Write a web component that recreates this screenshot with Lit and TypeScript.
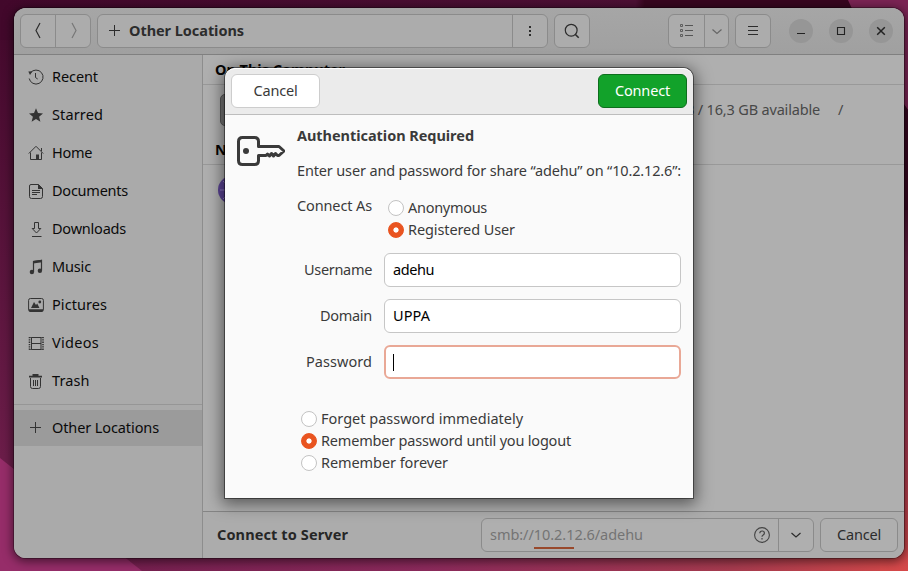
import { LitElement, html, svg, css, TemplateResult } from "lit";
import { customElement, property, state } from "lit/decorators.js";
import { classMap } from "lit/directives/class-map.js";

/* A single line of text tracked so that it fills a given advance width. */
@customElement("ui-text")
class UiText extends LitElement {
  @property() text = "";
  @property({ type: Number }) w = 0;
  @state() private spacing = 0;

  static styles = css`
    :host { display: inline-block; white-space: pre; flex: none; }
    .run { display: inline-block; white-space: pre; transform: translateY(-1px); }
  `;

  private fit() {
    const run = this.renderRoot.querySelector(".run") as HTMLElement;
    const natural = run.getBoundingClientRect().width - this.spacing * this.text.length;
    const next = (this.w - natural) / this.text.length;
    if (Math.abs(next - this.spacing) > 0.005) this.spacing = next;
  }

  firstUpdated() {
    this.fit();
    document.fonts.ready.then(() => this.fit());
  }

  render() {
    return html`<span class="run" style="letter-spacing:${this.spacing}px">${this.text}</span>`;
  }
}

const t = (text: string, w: number) => html`<ui-text .text=${text} .w=${w}></ui-text>`;

const icon = (body: TemplateResult, size = 16) => html`
  <svg width=${size} height=${size} viewBox="0 0 ${size} ${size}" fill="none" stroke="currentColor">${body}</svg>`;

const icons: Record<string, TemplateResult> = {
  recent: svg`<path d="M2.500 3.800A7 7 0 1 1 1.200 9.500M7.500 4v4.500l2.200 1.500"/><path d="M.3 2.600l4.200-.4L2 6z" fill="currentColor" stroke="none"/>`,
  star: svg`<path d="M8 1.200l2 4.900 5 .3-3.900 3.300 1.300 5L8 12l-4.400 2.700 1.300-5L1 6.400l5-.3z" fill="currentColor" stroke="none"/>`,
  home: svg`<path d="M.8 8.500L8 1.300l7.200 7.200M2.500 7.500v7h11v-7M13.500 3v3"/><path d="M8 9.500h3V14H8z" fill="currentColor" stroke="none"/>`,
  doc: svg`<path d="M3 1.500h7.500l4 4v8q0 2-2 2H3.500q-2 0-2-2V3q0-1.500 1.500-1.500zM4 7.500h8M4 9.500h8M4 11.500h5"/><path d="M10 1v5h5z" fill="currentColor" stroke="none"/>`,
  down: svg`<path d="M6.500 1.500h4v6h2.300L8.500 12 4.200 7.500h2.300zM4 15.500h9.500"/>`,
  music: svg`<path d="M5.500 13V2.500l8-1V11" stroke-width="1.200"/><path d="M5 2l9-1.200v2.400L5 4.400z" fill="currentColor" stroke="none"/><circle cx="3.900" cy="13" r="2.200" fill="currentColor" stroke="none"/><circle cx="11.900" cy="11.800" r="2.200" fill="currentColor" stroke="none"/>`,
  pic: svg`<rect x=".6" y="1.500" width="14.800" height="12.500" rx="1.800"/><path d="M.5 12.200h15v1q0 1.800-1.800 1.800H2.300Q.5 15 .5 13.200zM3 11l3-6 2 3 1.200-1.500L11.500 11z" fill="currentColor" stroke="none"/><circle cx="11.800" cy="5" r="1.400" fill="currentColor" stroke="none"/>`,
  video: svg`<path d="M1.500 2v13M15 2v13" stroke-width="1.600" stroke-dasharray="1.300 1"/><path d="M3.500 2.500h9.500v12H3.500zM3.500 8.500H13"/><path d="M1 2.500h14.500M1 14.500h14.500" stroke-width=".7"/>`,
  trash: svg`<path d="M2.500 5v8.500q0 2 2 2h6q2 0 2-2V5M5.500 7v6M7.500 7v6M9.500 7v6"/><path d="M1 3.700h13M4.500 2h6" stroke-width="1.800"/>`,
  plus: svg`<path d="M7.500 2v11M2 7.500h11"/>`,
};

const places: [string, string, number][] = [
  ["recent", "Recent", 46], ["star", "Starred", 51], ["home", "Home", 40],
  ["doc", "Documents", 76], ["down", "Downloads", 74], ["music", "Music", 39],
  ["pic", "Pictures", 55], ["video", "Videos", 47], ["trash", "Trash", 37.5],
];

@customElement("app-root")
class AppRoot extends LitElement {
  static styles = css`
    :host {
      display: block; position: relative; width: 908px; height: 571px; overflow: hidden;
      font: 14.5px/22px "Noto Sans", sans-serif; color: #0a0a0a;
    }
    * { box-sizing: border-box; }
    svg { display: block; flex: none; }
    .wall { position: absolute; inset: 0; }
    .stage { position: relative; padding: 8px 4px 13px 14px; height: 571px; }
    .window {
      height: 550px; border-radius: 12px; overflow: hidden; background: #afafaf;
      display: flex; flex-direction: column;
    }
    .shade { border-radius: 12px; box-shadow: 0 2px 10px 2px rgba(0,0,0,.5), 0 0 0 1px rgba(0,0,0,.3); }
    .top {
      height: 47px; flex: none; background: linear-gradient(#a6a6a6, #a0a0a0);
      border-bottom: 1px solid #808080; padding: 0 11px 1px 6px; display: flex; align-items: center;
    }
    .box {
      height: 34px; border: 1px solid #8b8b8b; border-radius: 6px; background: #acacac;
      display: flex; align-items: stretch; flex: none; color: #2c2c2c;
    }
    .box > * { display: flex; align-items: center; justify-content: center; }
    .box > * + * { border-left: 1px solid #8b8b8b; }
    .nav { width: 71px; margin-right: 6px; }
    .nav > * { flex: 1; }
    .nav > .dim { color: #777; }
    .path { width: 451px; margin-right: 6px; }
    .crumb { flex: 1; justify-content: flex-start; padding-left: 9px; gap: 6px; font-weight: 700; }
    .kebab { width: 35px; }
    .sq { width: 36px; }
    .sq > * { flex: 1; }
    .view { width: 61px; margin: 0 6px 0 auto; color: #555; }
    .view > :first-child { width: 35px; }
    .view > :last-child { flex: 1; color: #666; }
    .winbtns { display: flex; gap: 16px; margin-left: 18px; }
    .round { width: 24px; height: 24px; border-radius: 12px; background: #969696; display: grid; place-items: center; color: #222; }
    .body { flex: 1; display: flex; min-height: 0; }
    .side { width: 189px; background: #aaa; border-right: 1px solid #8d8d8d; padding-top: 3px; flex: none; }
    .place { height: 38px; padding-left: 14px; display: flex; align-items: center; gap: 8px; }
    .place svg { color: #333; }
    .rule { height: 1px; background: #969696; margin: 4px 0 5px; }
    .place.on { height: 36px; background: #9b9b9b; }
    .main { flex: 1; display: flex; flex-direction: column; }
    .head { height: 30px; border-bottom: 1px solid #999; padding: 0 0 0 12px; font-weight: 700; display: flex; align-items: center; color: #050505; }
    .row { height: 50px; padding-left: 17px; display: flex; align-items: center; color: #484848; }
    .drive { width: 32px; height: 32px; border: 1px solid #555; border-radius: 5px; background: #747474; }
    .avail { margin-left: 399px; }
    .mount { margin-left: 18px; }
    .net { width: 28px; height: 28px; border-radius: 14px; background: #5a4394; margin-left: -2px; display: grid; }
    .foot { height: 47px; margin-top: auto; border-top: 1px solid #858585; background: #acacac; padding: 0 6px 0 14px; display: flex; align-items: center; }
    .foot .label { font-weight: 700; color: #262626; margin-right: auto; }
    .addr { width: 333px; margin-right: 6px; background: #afafaf; }
    .url { flex: 1; position: relative; justify-content: flex-start; padding-left: 8px; color: #747474; }
    .url svg { margin: 0 8px 0 auto; color: #444; }
    .mark { position: absolute; left: 52px; bottom: 2px; width: 40px; height: 2px; background: #99492c; }
    .drop { width: 35px; }
    .quit { width: 78px; background: #afafaf; }
    .quit > * { flex: 1; }

    .dialog {
      position: absolute; left: 225px; top: 68px; width: 468px; height: 430px;
      border-radius: 10px 10px 0 0; background: #fafafa; color: #3a3a3a;
      box-shadow: 0 0 0 1px rgba(0,0,0,.45), 0 3px 16px 3px rgba(0,0,0,.5);
    }
    .dtop { height: 47px; background: #ebebeb; border-bottom: 1px solid #bdbdbd; border-top: 1px solid #fff; border-radius: 10px 10px 0 0; padding: 0 6px 1px; display: flex; align-items: center; justify-content: space-between; }
    .btn { width: 89px; height: 34px; border-radius: 6px; border: 1px solid #cdcdcd; background: #fff; display: grid; place-items: center; }
    .go { background: #12a22a; border-color: #0d6e1d; color: #fff; }
    .content { display: flex; padding: 10px 12px 0 12px; gap: 12px; }
    .key { margin-top: 10px; }
    .form { flex: 1; min-width: 0; }
    .title { font-weight: 700; height: 22px; }
    .msg { margin-top: 13px; height: 22px; }
    .as { display: flex; margin-top: 13px; height: 46px; }
    .as > :first-child { width: 91px; }
    .opts { padding-top: 2px; }
    .opt { height: 22px; display: flex; align-items: center; gap: 4px; }
    .dot { width: 16px; height: 16px; border-radius: 8px; border: 1px solid #c3c3c3; background: #fff; }
    .dot.sel { background: radial-gradient(circle, #fff 2.2px, #e95420 3px); border-color: #e95420; }
    .field { display: flex; align-items: center; height: 34px; margin-top: 12px; }
    .name { width: 75px; margin-right: 12px; display: flex; justify-content: flex-end; }
    .input { width: 297px; height: 34px; border: 1px solid #c6c6c6; border-radius: 6px; background: #fff; color: #000; padding-left: 8px; display: flex; align-items: center; }
    .input.focus { border: 2px solid #e9a896; padding-left: 7px; }
    .caret { width: 1px; height: 17px; background: #000; }
    .save { padding: 29px 0 0 4px; }
  `;

  private opt(label: string, w: number, sel = false) {
    return html`<div class="opt"><span class=${classMap({ dot: true, sel })}></span>${t(label, w)}</div>`;
  }

  private field(name: string, w: number, value: unknown, focus = false) {
    return html`<div class="field"><div class="name">${t(name, w)}</div>
      <div class=${classMap({ input: true, focus })}>${value}</div></div>`;
  }

  render() {
    return html`
      <svg class="wall" width="908" height="571" viewBox="0 0 908 571">
        <defs>
          <linearGradient id="l" x1="0" y1="0" x2="0" y2="1"><stop offset="0" stop-color="#42082b"/><stop offset=".8" stop-color="#6b1d49"/></linearGradient>
          <linearGradient id="b" x1="0" x2="1"><stop offset="0" stop-color="#6e1c4b"/><stop offset=".45" stop-color="#8c2a5c"/><stop offset=".8" stop-color="#a73b4f"/><stop offset="1" stop-color="#d6494a"/></linearGradient>
          <linearGradient id="r" x1="0" y1="0" x2="0" y2="1"><stop offset="0" stop-color="#2d0719"/><stop offset=".2" stop-color="#681e45"/><stop offset=".6" stop-color="#a03551"/><stop offset="1" stop-color="#d6494a"/></linearGradient>
          <linearGradient id="t" x1="0" x2="1"><stop offset="0" stop-color="#42082b"/><stop offset=".7" stop-color="#4d1035"/><stop offset=".71" stop-color="#38061f"/><stop offset="1" stop-color="#38061f"/></linearGradient>
        </defs>
        <rect width="908" height="571" fill="url(#l)"/>
        <rect width="908" height="40" fill="url(#t)"/>
        <rect y="530" x="30" width="878" height="41" fill="url(#b)"/>
        <path d="M0 458L142 571H0z" fill="#962d69"/>
        <rect x="880" y="180" width="28" height="391" fill="url(#r)"/>
        <path d="M848 0h60v110L880 70z" fill="#7b2454"/>
        <path d="M880 70l28 40v100h-28z" fill="#35061f"/>
      </svg>
      <div class="stage"><div class="shade"><div class="window">
        <div class="top">
          <div class="box nav">
            <div>${icon(svg`<path d="M10 1L6 8.500l4 7.500" stroke-width="1.200"/>`, 17)}</div>
            <div class="dim">${icon(svg`<path d="M7 1l4 7.500L7 16" stroke-width="1.200"/>`, 17)}</div>
          </div>
          <div class="box path">
            <div class="crumb">${icon(icons.plus)}${t("Other Locations", 115)}</div>
            <div class="kebab">${icon(svg`<path d="M8 3v2M8 7v2M8 11v2" stroke-width="2"/>`)}</div>
          </div>
          <div class="box sq"><div>${icon(svg`<circle cx="7.200" cy="7.200" r="5.900" stroke-width="1.200"/><path d="M11.200 11.200l3.500 3.500" stroke-width="1.600"/>`)}</div></div>
          <div class="box view">
            <div>${icon(svg`<path d="M6 2.500h8M6 7.500h8M6 12.500h8"/><path d="M1.500 1.500h2v2h-2zM1.500 6.500h2v2h-2zM1.500 11.500h2v2h-2z" stroke-width=".9"/>`)}</div>
            <div>${icon(svg`<path d="M3.500 6.500l4.500 4 4.500-4" stroke-width="1.200"/>`)}</div>
          </div>
          <div class="box sq"><div>${icon(svg`<path d="M3 3.500h10M3 7.500h10M3 11.500h10" stroke-width="1.200"/>`)}</div></div>
          <div class="winbtns">
            <div class="round">${icon(svg`<path d="M4 10.500h8" stroke-width="1.200"/>`)}</div>
            <div class="round">${icon(svg`<path d="M4.500 4.500h7v7h-7z" stroke-width="1.100"/>`)}</div>
            <div class="round">${icon(svg`<path d="M4.200 4.200l7.600 7.600M11.800 4.200l-7.600 7.600" stroke-width="1.500"/>`)}</div>
          </div>
        </div>
        <div class="body">
          <div class="side">
            ${places.map(([i, n, w]) => html`<div class="place">${icon(icons[i])}${t(n, w)}</div>`)}
            <div class="rule"></div>
            <div class="place on">${icon(icons.plus)}${t("Other Locations", 107)}</div>
          </div>
          <div class="main">
            <div class="head">${t("On This Computer", 130)}</div>
            <div class="row"><div class="drive"></div>
              <div class="avail">${t("3,8 GB / 16,3 GB available", 169)}</div><div class="mount">${t("/", 6)}</div></div>
            <div class="head">${t("Networks", 67)}</div>
            <div class="row"><div class="net">${icon(svg`<path d="M14 2v24M2 14h24M5 5l18 18M5 23L23 5" stroke="#8f7cc0"/>`, 28)}</div></div>
            <div class="foot">
              <div class="label">${t("Connect to Server", 131)}</div>
              <div class="box addr">
                <div class="url">${t("smb://10.2.12.6/adehu", 153)}<span class="mark"></span>
                  ${icon(svg`<circle cx="8" cy="8" r="7.400" stroke-width="1.100"/><path d="M5.800 6.300q0-2.300 2.300-2.300t2.300 2q0 1.200-1.200 1.900T8 9.800M8 11v1.500" stroke-width="1.200"/>`)}</div>
                <div class="drop">${icon(svg`<path d="M3.500 6l4.500 4 4.500-4" stroke-width="1.200"/>`)}</div>
              </div>
              <div class="box quit"><div>${t("Cancel", 44)}</div></div>
            </div>
          </div>
        </div>
      </div></div></div>
      <div class="dialog">
        <div class="dtop"><div class="btn">${t("Cancel", 44)}</div><div class="btn go">${t("Connect", 55)}</div></div>
        <div class="content">
          <svg class="key" width="48" height="32" viewBox="0 0 48 32" fill="none" stroke="#3a3a3a" stroke-width="3" stroke-linejoin="round">
            <path d="M21.500 11.500V6.500q0-4-4-4h-12q-4 0-4 4v19q0 4 4 4h12q4 0 4-4V20.500H29l1.500-1.500 2 2 2-2.500 2 2.500 2-2.500 2 2h1.500l5-4.500-5-4.500z"/>
            <circle cx="9" cy="16" r="3" fill="#3a3a3a" stroke="none"/>
          </svg>
          <div class="form">
            <div class="title">${t("Authentication Required", 177)}</div>
            <div class="msg">${t("Enter user and password for share “adehu” on “10.2.12.6”:", 384)}</div>
            <div class="as"><div>${t("Connect As", 75)}</div>
              <div class="opts">${this.opt("Anonymous", 79)}${this.opt("Registered User", 107, true)}</div></div>
            ${this.field("Username", 68, t("adehu", 41))}
            ${this.field("Domain", 52, t("UPPA", 37))}
            ${this.field("Password", 66, html`<span class="caret"></span>`, true)}
            <div class="save">
              ${this.opt("Forget password immediately", 202)}
              ${this.opt("Remember password until you logout", 250, true)}
              ${this.opt("Remember forever", 127)}
            </div>
          </div>
        </div>
      </div>`;
  }
}
